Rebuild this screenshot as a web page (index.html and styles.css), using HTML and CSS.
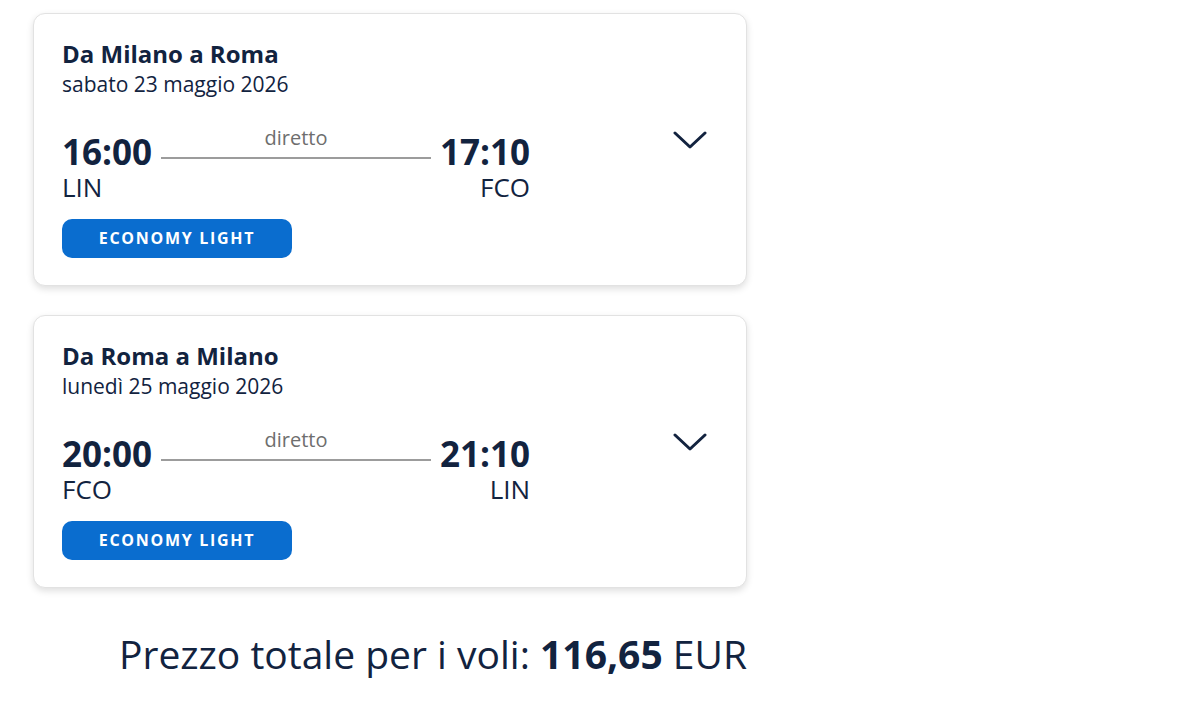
FILE: index.html
```html
<!DOCTYPE html>
<html lang="it">
<head>
  <meta charset="UTF-8" />
  <meta name="viewport" content="width=device-width, initial-scale=1.0"/>
  <title>Riepilogo voli</title>
  <link rel="stylesheet" href="styles.css">
</head>
<body>
  <div class="summary">
    <div class="card">
      <h2 class="route">Da Milano a Roma</h2>
      <p class="date">sabato 23 maggio 2026</p>
      <div class="times">
        <div class="point">
          <span class="time">16:00</span>
          <span class="code">LIN</span>
        </div>
        <div class="segment">
          <span class="stops">diretto</span>
          <span class="line"></span>
        </div>
        <div class="point right">
          <span class="time">17:10</span>
          <span class="code">FCO</span>
        </div>
        <svg class="toggle" width="34" height="20" viewBox="0 0 34 20">
          <path d="M2 2 L17 16 L32 2" fill="none" stroke="#13233f" stroke-width="3" stroke-linecap="round" stroke-linejoin="round"/>
        </svg>
      </div>
      <span class="fare">ECONOMY LIGHT</span>
    </div>

    <div class="card">
      <h2 class="route">Da Roma a Milano</h2>
      <p class="date">lunedì 25 maggio 2026</p>
      <div class="times">
        <div class="point">
          <span class="time">20:00</span>
          <span class="code">FCO</span>
        </div>
        <div class="segment">
          <span class="stops">diretto</span>
          <span class="line"></span>
        </div>
        <div class="point right">
          <span class="time">21:10</span>
          <span class="code">LIN</span>
        </div>
        <svg class="toggle" width="34" height="20" viewBox="0 0 34 20">
          <path d="M2 2 L17 16 L32 2" fill="none" stroke="#13233f" stroke-width="3" stroke-linecap="round" stroke-linejoin="round"/>
        </svg>
      </div>
      <span class="fare">ECONOMY LIGHT</span>
    </div>

    <p class="total">Prezzo totale per i voli: <strong>116,65</strong> EUR</p>
  </div>
</body>
</html>
```

FILE: styles.css
```css
body {
  margin: 0;
  font-family: "Open Sans", "Noto Sans", Arial, sans-serif;
  color: #12233f;
  background: #fff;
}
.summary {
  width: 714px;
  padding: 13px 0 0 33px;
}
.card {
  background: #fff;
  border: 1px solid #e2e2e2;
  border-radius: 12px;
  box-shadow: 0 3px 7px rgba(0,0,0,0.13);
  padding: 26px 28px 27px;
  margin-bottom: 29px;
}
.route {
  margin: 0;
  font-size: 24px;
  line-height: 28px;
  font-weight: 700;
}
.date {
  margin: 2px 0 0;
  font-size: 21px;
  line-height: 28px;
}
.times {
  display: flex;
  align-items: flex-start;
  margin-top: 28px;
}
.point {
  display: flex;
  flex-direction: column;
  padding-top: 6px;
}
.point.right {
  align-items: flex-end;
}
.time {
  font-size: 35px;
  line-height: 40px;
  font-weight: 700;
}
.code {
  font-size: 26px;
  line-height: 30px;
}
.segment {
  width: 270px;
  margin: 0 9px;
  display: flex;
  flex-direction: column;
  align-items: center;
}
.stops {
  font-size: 20px;
  line-height: 24px;
  color: #6e6e6e;
}
.line {
  display: block;
  width: 100%;
  height: 2px;
  margin-top: 7px;
  background: #9c9c9c;
}
.toggle {
  margin: 5px 11px 0 auto;
}
.fare {
  display: block;
  width: 230px;
  height: 39px;
  margin-top: 17px;
  border-radius: 10px;
  background: #0a6dcf;
  color: #fff;
  font-size: 16px;
  font-weight: 700;
  letter-spacing: 1.7px;
  line-height: 39px;
  text-align: center;
}
.total {
  margin: 42px 0 0;
  font-size: 39px;
  line-height: 48px;
  text-align: right;
}
.total strong {
  font-weight: 700;
}
```
